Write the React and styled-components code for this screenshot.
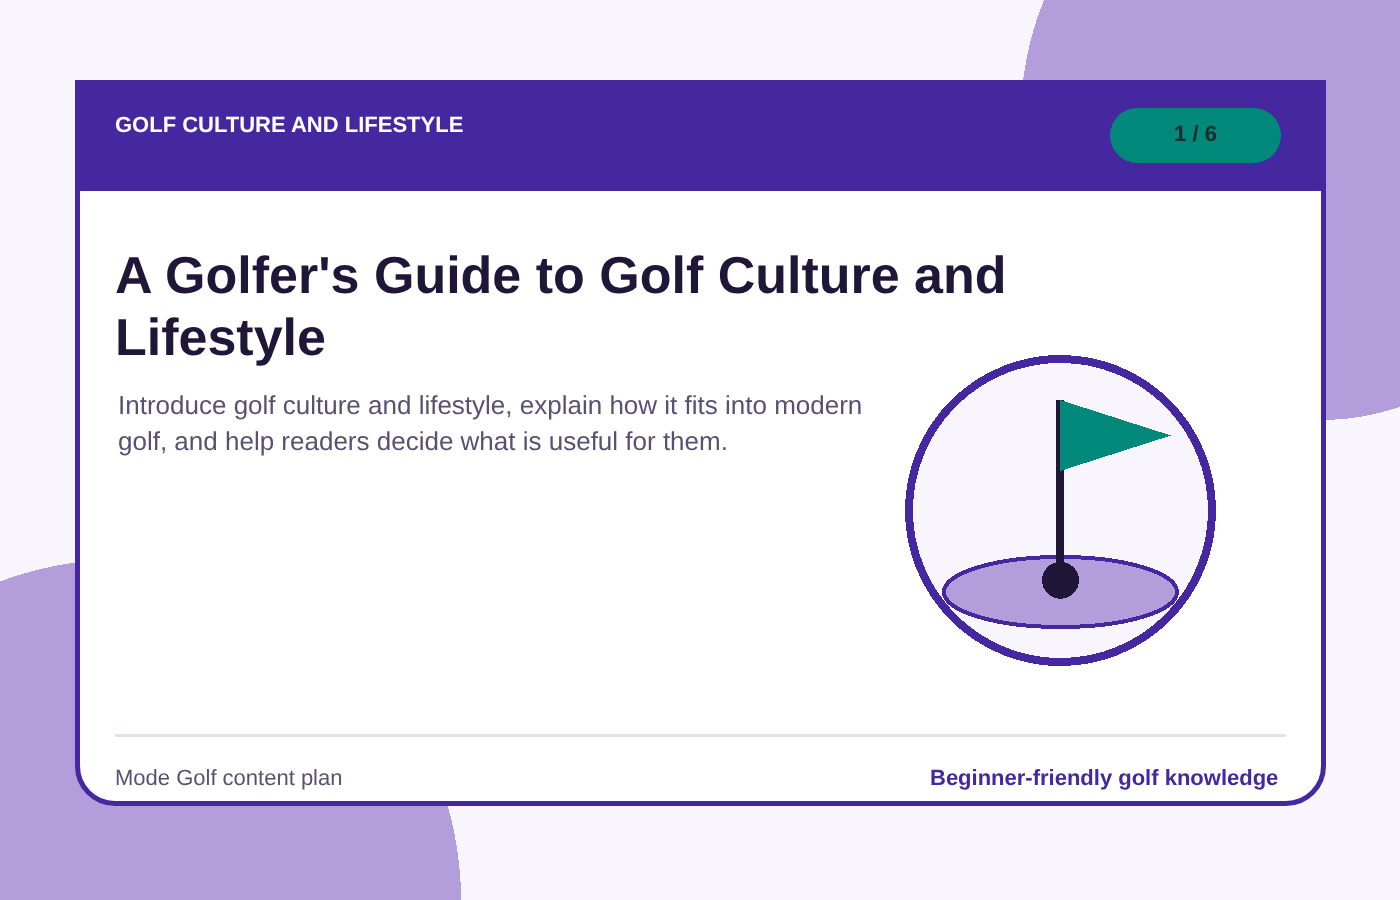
import React from "react";
import styled, { createGlobalStyle, css } from "styled-components";

const GlobalStyle = createGlobalStyle`
  html, body {
    margin: 0;
    padding: 0;
  }
  body {
    font-family: "Liberation Sans", Arial, sans-serif;
    text-rendering: geometricPrecision;
  }
`;

// own layer, so the text is smoothed in grey like the reference
const greyText = css`
  will-change: transform;
`;

const Page = styled.div`
  position: relative;
  width: 1400px;
  height: 900px;
  padding: 80px 74px 94px 75px;
  box-sizing: border-box;
  overflow: hidden;
  background: #f8f6fc;
`;

// the two lilac shapes behind the card
const Backdrop = styled.svg`
  position: absolute;
  left: 0;
  top: 0;
  width: 1400px;
  height: 900px;
`;

const Card = styled.main`
  position: relative;
  height: 100%;
  display: flex;
  flex-direction: column;
  box-sizing: border-box;
  background: #fff;
  border: 5px solid #4527a0;
  border-radius: 0 0 40px 40px;
  overflow: hidden;
`;

const Header = styled.header`
  display: flex;
  justify-content: space-between;
  align-items: flex-start;
  height: 106px;
  flex-shrink: 0;
  box-sizing: border-box;
  padding: 23px 40px 0 35px;
  background: #4527a0;
`;

const Kicker = styled.div`
  ${greyText}
  margin-top: 4px;
  color: #fff;
  font-size: 22px;
  font-weight: 700;
  line-height: 25px;
`;

const Counter = styled.div`
  ${greyText}
  width: 171px;
  height: 55px;
  border-radius: 28px;
  background: #00897b;
  color: #1f2a2a;
  font-size: 22px;
  font-weight: 700;
  line-height: 51px;
  text-align: center;
`;

const Body = styled.section`
  flex: 1;
  display: flex;
  flex-direction: column;
  padding: 54px 35px 0;
`;

const Title = styled.h1`
  ${greyText}
  margin: 0;
  width: 960px;
  color: #201637;
  font-size: 52px;
  font-weight: 700;
  line-height: 62px;
`;

const Row = styled.div`
  display: flex;
  justify-content: space-between;
  align-items: flex-start;
`;

const Intro = styled.p`
  ${greyText}
  margin: 18px 0 0 3px;
  width: 770px;
  color: #5a5070;
  font-size: 26px;
  line-height: 36px;
`;

const Flag = styled.svg`
  display: block;
  width: 320px;
  height: 320px;
  margin: -19px 66px 0 0;
`;

const Footer = styled.footer`
  display: flex;
  justify-content: space-between;
  align-items: flex-start;
  height: 67px;
  margin: 0 35px;
  padding: 28px 8px 0 0;
  box-sizing: border-box;
  border-top: 3px solid #dde5e1;
  font-size: 22px;
  line-height: 25px;
`;

const Source = styled.span`
  ${greyText}
  color: #5a5070;
`;

const Tagline = styled.strong`
  ${greyText}
  color: #4527a0;
`;

export default function App() {
  return (
    <Page>
      <GlobalStyle />
      <Backdrop viewBox="0 0 1400 900" shapeRendering="crispEdges">
        <circle cx="120.5" cy="900" r="340.5" fill="#b39ddb" />
        <path
          d="M1044 0 C1034 24 1027 50 1023 80 L1023 200 L1326 420 C1352 420 1378 414 1400 407 L1400 0 Z"
          fill="#b39ddb"
        />
      </Backdrop>
      <Card>
        <Header>
          <Kicker>GOLF CULTURE AND LIFESTYLE</Kicker>
          <Counter>1 / 6</Counter>
        </Header>
        <Body>
          <Title>A Golfer's Guide to Golf Culture and Lifestyle</Title>
          <Row>
            <Intro>
              Introduce golf culture and lifestyle, explain how it fits into modern golf, and help
              readers decide what is useful for them.
            </Intro>
            <Flag viewBox="0 0 320 320" shapeRendering="crispEdges">
              <circle cx="160.5" cy="160.5" r="151.5" fill="#f8f6fc" stroke="#4527a0" strokeWidth="8" />
              <ellipse cx="160.5" cy="242" rx="116.5" ry="35" fill="#b39ddb" stroke="#4527a0" strokeWidth="4" />
              <rect x="156" y="50" width="8" height="180" fill="#201637" />
              <circle cx="160.5" cy="230.3" r="18.5" fill="#201637" />
              <polygon points="160,50 271,85.5 160,121" fill="#00897b" />
            </Flag>
          </Row>
        </Body>
        <Footer>
          <Source>Mode Golf content plan</Source>
          <Tagline>Beginner-friendly golf knowledge</Tagline>
        </Footer>
      </Card>
    </Page>
  );
}
